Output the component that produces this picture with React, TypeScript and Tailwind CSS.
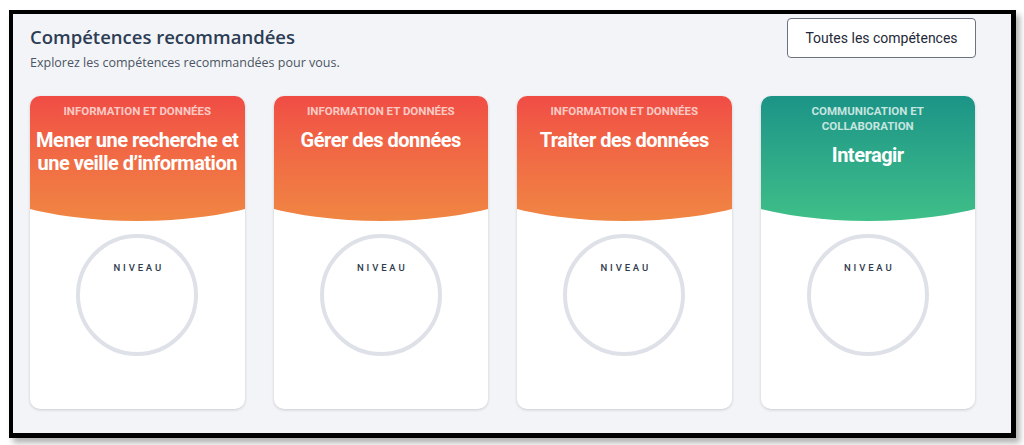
import React from "react";

type Skill = {
  domain: string;
  title: string;
  tone: "orange" | "green";
};

const skills: Skill[] = [
  { domain: "Information et données", title: "Mener une recherche et une veille d’information", tone: "orange" },
  { domain: "Information et données", title: "Gérer des données", tone: "orange" },
  { domain: "Information et données", title: "Traiter des données", tone: "orange" },
  { domain: "Communication et collaboration", title: "Interagir", tone: "green" },
];

function SkillCard({ skill }: { skill: Skill }) {
  const isGreen = skill.tone === "green";
  return (
    <div className="flex h-[313px] flex-col overflow-hidden rounded-[10px] bg-white shadow-[0_1px_3px_rgba(15,23,42,0.18)]">
      <div className="relative h-[125px] overflow-hidden">
        <div
          className={
            isGreen
              ? "absolute -left-[64px] -right-[64px] top-0 h-[125px] rounded-bl-[171px_55px] rounded-br-[171px_55px] bg-gradient-to-b from-[#1b9487] to-[#3fbf88]"
              : "absolute -left-[64px] -right-[64px] top-0 h-[125px] rounded-bl-[171px_55px] rounded-br-[171px_55px] bg-gradient-to-b from-[#f04c45] to-[#f08643]"
          }
        />
        <div className="relative flex flex-col items-center px-[5px] pt-[8px] text-center font-['Roboto',sans-serif]">
          <div className={isGreen ? "w-[160px] text-[11.5px] font-bold uppercase leading-[15px] text-white/75" : "text-[11.5px] font-bold uppercase leading-[15px] text-white/70"}>
            {skill.domain}
          </div>
          <div className="mt-[10px] text-[20px] font-bold leading-[23px] tracking-[-0.5px] text-white">{skill.title}</div>
        </div>
      </div>
      <div className="flex justify-center pt-[13px]">
        <div className="flex h-[122px] w-[122px] justify-center rounded-full border-4 border-[#dfe1e8] pt-[23px]">
          <span className="pl-[3px] font-['Roboto',sans-serif] text-[9.5px] font-medium tracking-[0.3em] text-[#2f3b4c]">NIVEAU</span>
        </div>
      </div>
    </div>
  );
}

export default function App() {
  return (
    <div className="h-[445px] w-[1024px] bg-white pl-[9px] pt-[10px]">
      <div className="h-[428px] w-[1007px] border-4 border-r-[5px] border-b-[5px] border-black bg-[#f3f4f7] shadow-[4px_5px_6px_rgba(0,0,0,0.3)]">
        <div className="w-[963px] pl-[17px] pt-[4px]">
          <div className="flex items-start justify-between">
            <div className="pt-[5px] font-['Open_Sans',sans-serif]">
              <h2 className="text-[18.5px] font-semibold leading-[28px] text-[#2c3d55]">Compétences recommandées</h2>
              <p className="mt-[4px] text-[12.5px] leading-[16px] text-[#4b5563]">Explorez les compétences recommandées pour vous.</p>
            </div>
            <button
              type="button"
              className="h-[40px] w-[189px] rounded-[4px] border border-[#6b7280] bg-white font-['Roboto',sans-serif] text-[14px] text-[#1f2937]"
            >
              Toutes les compétences
            </button>
          </div>
          <div className="mt-[25px] grid w-[945px] grid-cols-4 gap-[29px]">
            {skills.map((skill) => (
              <SkillCard key={skill.title} skill={skill} />
            ))}
          </div>
        </div>
      </div>
    </div>
  );
}
